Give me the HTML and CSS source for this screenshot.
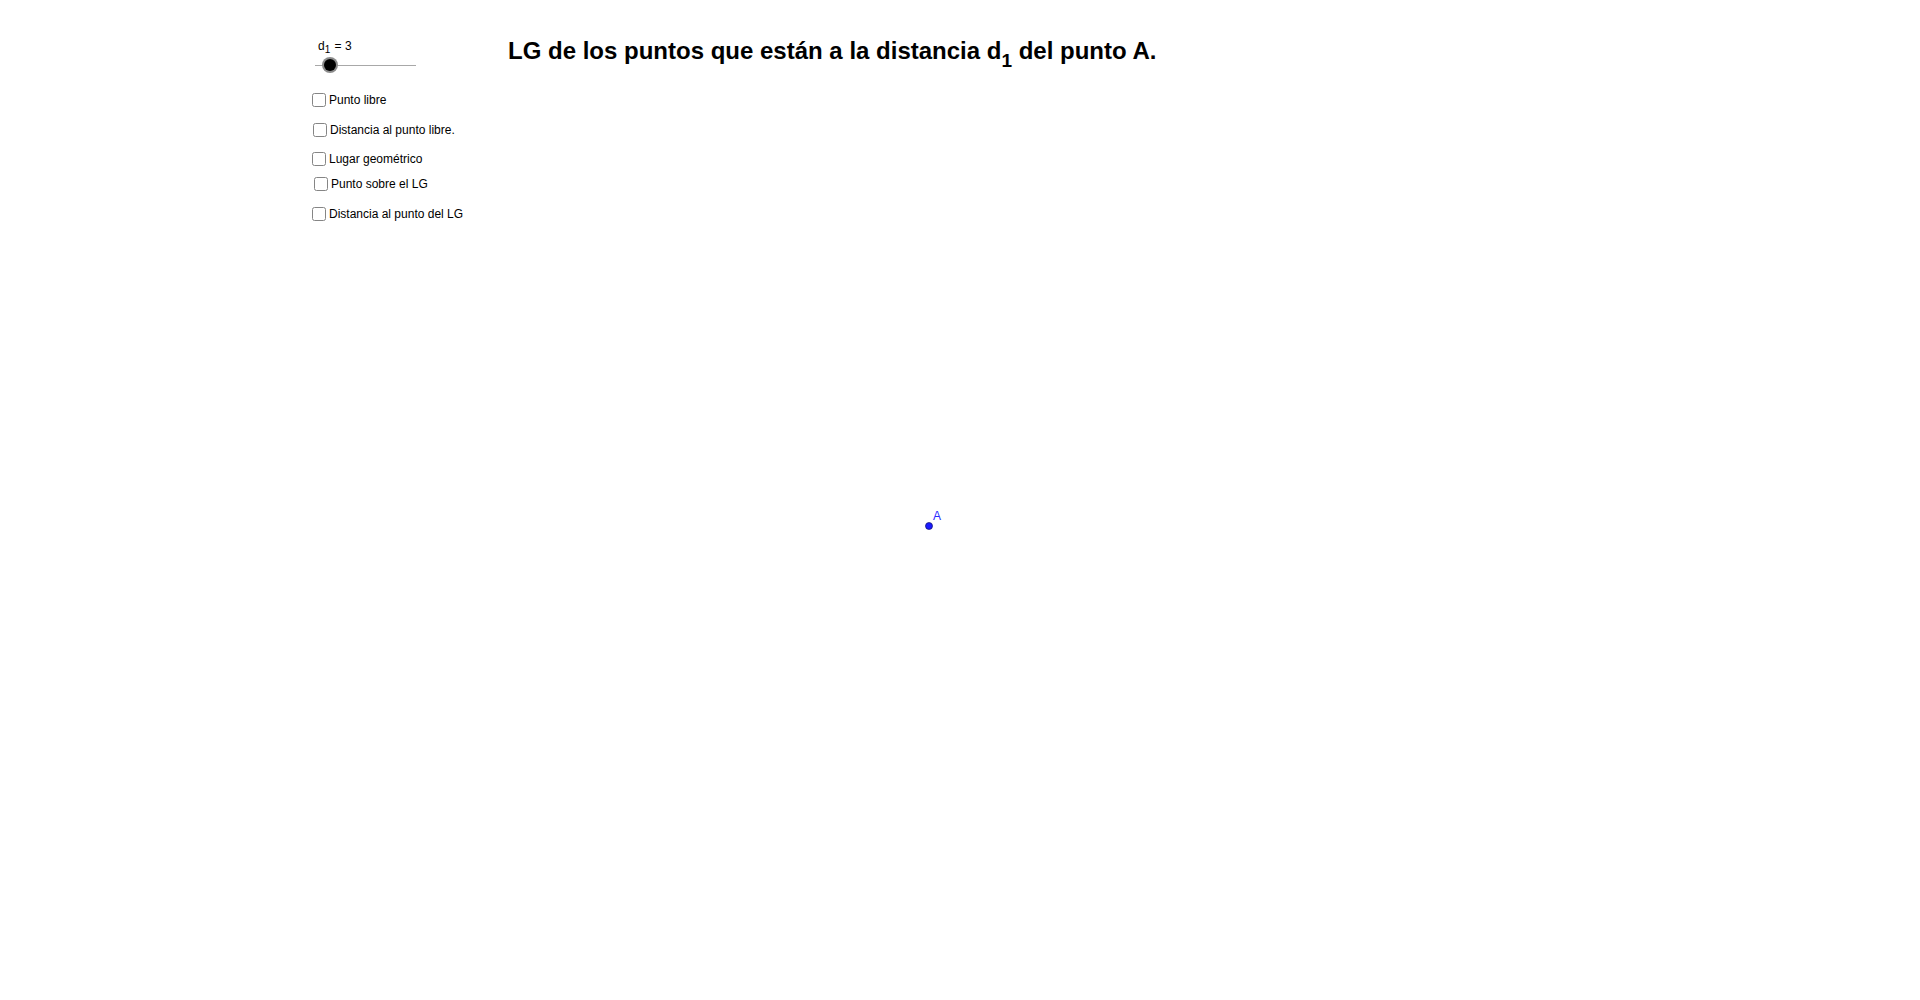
FILE: index.html
```html
<!DOCTYPE html>
<html lang="es">
<head>
<meta charset="utf-8">
<title>LG de los puntos</title>
<link rel="stylesheet" href="styles.css">
</head>
<body>
<div class="canvas">
  <div class="slider">
    <div class="slider-label">d<sub class="sub-sm">1</sub> = 3</div>
    <svg class="slider-track" width="112" height="20" viewBox="0 0 112 20">
      <line x1="5" y1="10.5" x2="106" y2="10.5" stroke="#a8a8a8" stroke-width="1"/>
      <circle cx="20" cy="10" r="8" fill="#8c8c8c"/>
      <circle cx="20" cy="10" r="6" fill="#000"/>
    </svg>
  </div>

  <label class="cb-row row-1"><span class="cb"></span><span class="cb-text">Punto libre</span></label>
  <label class="cb-row row-2"><span class="cb"></span><span class="cb-text">Distancia al punto libre.</span></label>
  <label class="cb-row row-3"><span class="cb"></span><span class="cb-text">Lugar geométrico</span></label>
  <label class="cb-row row-4"><span class="cb"></span><span class="cb-text">Punto sobre el LG</span></label>
  <label class="cb-row row-5"><span class="cb"></span><span class="cb-text">Distancia al punto del LG</span></label>

  <h1 class="title">LG de los puntos que están a la distancia d<sub class="sub-lg">1</sub> del punto A.</h1>

  <svg class="point" width="12" height="12" viewBox="0 0 12 12">
    <circle cx="6" cy="6" r="3.5" fill="#1a1aff" stroke="#10106a" stroke-width="0.7"/>
  </svg>
  <div class="point-label">A</div>
</div>
</body>
</html>
```

FILE: styles.css
```css
html, body {
  margin: 0;
  padding: 0;
  background: #ffffff;
}

.canvas {
  position: relative;
  width: 1920px;
  height: 1000px;
  overflow: hidden;
  font-family: "Liberation Sans", Arial, sans-serif;
  color: #000;
}

.slider {
  position: absolute;
  left: 310px;
  top: 39px;
  display: flex;
  flex-direction: column;
}

.slider-label {
  margin-left: 8px;
  font-size: 12px;
  line-height: 14px;
  white-space: nowrap;
}

.sub-sm {
  font-size: 10px;
  line-height: 0;
  vertical-align: -3px;
  margin-right: 1px;
}

.slider-track {
  display: block;
  margin-top: 2px;
}

.cb-row {
  position: absolute;
  display: flex;
  align-items: center;
  gap: 3px;
  font-size: 12px;
  line-height: 14px;
  white-space: nowrap;
}

.row-1 { left: 312px; top: 93px; }
.row-2 { left: 313px; top: 123px; }
.row-3 { left: 312px; top: 152px; }
.row-4 { left: 314px; top: 177px; }
.row-5 { left: 312px; top: 207px; }

.cb {
  box-sizing: border-box;
  width: 14px;
  height: 14px;
  border: 1.5px solid #858585;
  border-radius: 2.5px;
  background: #fff;
}

.title {
  position: absolute;
  left: 508px;
  top: 39px;
  margin: 0;
  font-size: 24px;
  line-height: 24px;
  font-weight: bold;
  white-space: nowrap;
}

.sub-lg {
  font-size: 19px;
  line-height: 0;
  vertical-align: -8px;
}

.point {
  position: absolute;
  left: 923px;
  top: 520px;
}

.point-label {
  position: absolute;
  left: 933px;
  top: 509px;
  font-size: 12px;
  line-height: 14px;
  color: #2a2aff;
}
```
